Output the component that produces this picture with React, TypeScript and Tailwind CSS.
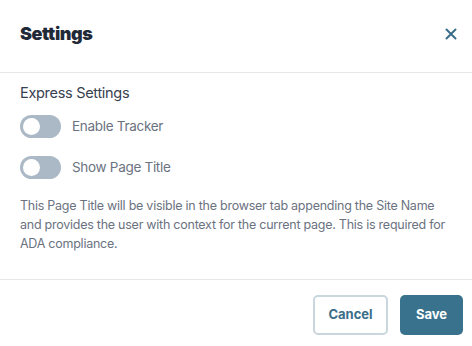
import React, { useState } from 'react';

const Toggle: React.FC<{ label: string }> = ({ label }) => {
  const [on, setOn] = useState(false);
  return (
    <div className="flex items-center gap-[11px] h-[23px]">
      <button
        onClick={() => setOn(!on)}
        className={`relative w-[41px] h-[23px] rounded-full ${on ? 'bg-[#39728c]' : 'bg-[#abb9c6]'}`}
      >
        <span className={`absolute top-[3px] w-[17px] h-[17px] rounded-full bg-white ${on ? 'left-[21px]' : 'left-[3px]'}`} />
      </button>
      <span className="text-[13.5px] tracking-[-0.3px] text-[#6b7280]">{label}</span>
    </div>
  );
};

export default function App() {
  return (
    <div className="w-[472px] h-[346px] bg-white overflow-hidden [font-family:Inter,sans-serif]">
      {/* Header */}
      <div className="h-[73px] flex items-center justify-between pl-5 pr-[15px] pb-[5px] border-b border-[#e5e7eb]">
        <h2 className="text-[18px] font-black text-[#1f2937] tracking-[-0.4px]">Settings</h2>
        <button className="text-[#3a6e88]">
          <svg width="12" height="12" viewBox="0 0 12 12" fill="none" stroke="currentColor" strokeWidth="2" strokeLinecap="round">
            <path d="M1.5 1.5l9 9M10.5 1.5l-9 9" />
          </svg>
        </button>
      </div>

      {/* Body */}
      <div className="px-5 pt-[10px] pb-[26px] border-b border-[#e5e7eb]">
        <div className="text-[14.5px] leading-5 tracking-[-0.3px] text-[#374151]">Express Settings</div>
        <div className="flex flex-col gap-[18px] mt-[12px]">
          <Toggle label="Enable Tracker" />
          <Toggle label="Show Page Title" />
        </div>
        <p className="mt-[17px] text-[12.5px] leading-[19px] tracking-[-0.25px] text-[#6b7280]">
          This Page Title will be visible in the browser tab appending the Site Name and provides the user with context for the current page. This is required for ADA compliance.
        </p>
      </div>

      {/* Footer */}
      <div className="flex justify-end gap-3 pt-[15px] pr-[9px]">
        <button className="w-[75px] h-[40px] rounded-[5px] border-2 border-[#c9d6de] text-[13px] font-bold text-[#3a6e88]">
          Cancel
        </button>
        <button className="w-[63px] h-[40px] rounded-[5px] bg-[#39728c] text-[13px] font-bold text-white">
          Save
        </button>
      </div>
    </div>
  );
}
